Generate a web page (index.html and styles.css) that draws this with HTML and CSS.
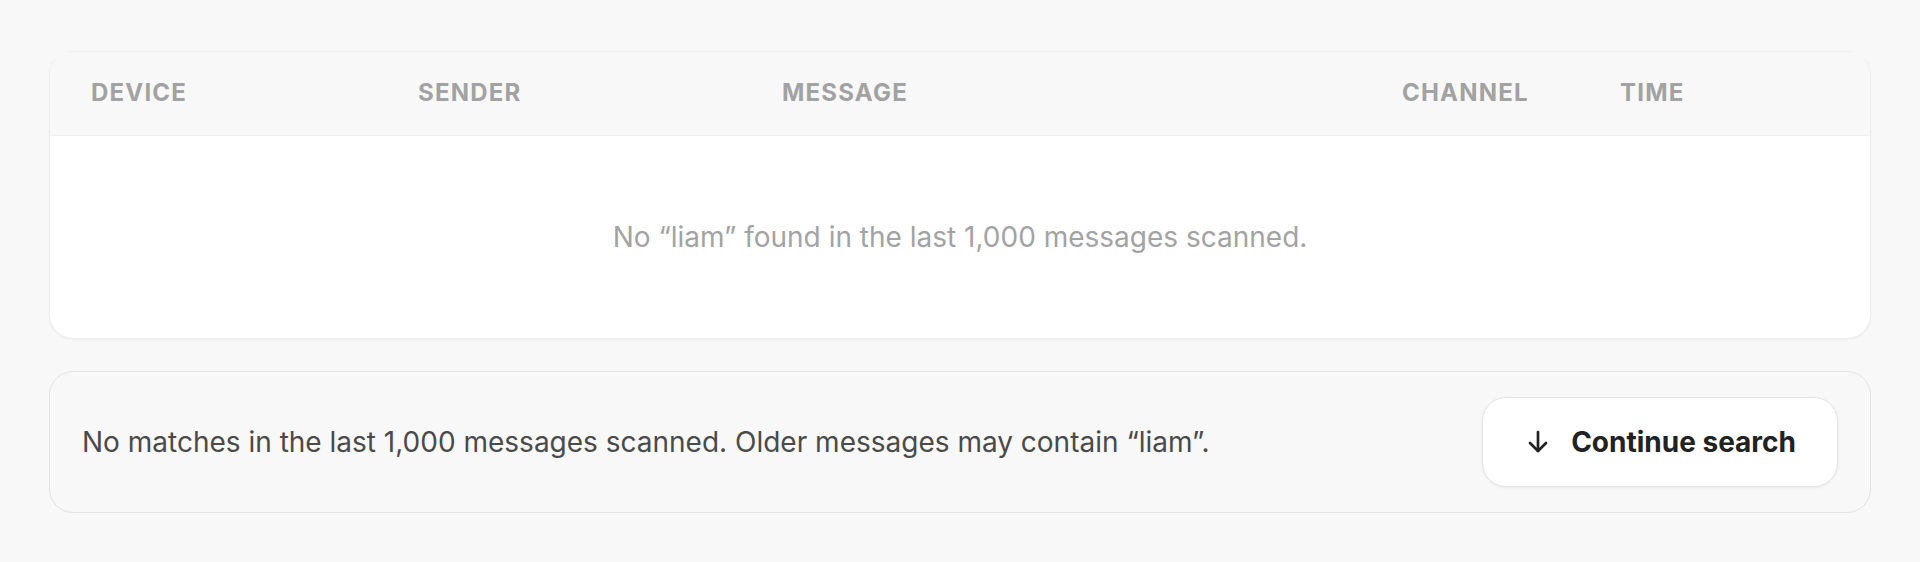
FILE: index.html
```html
<!DOCTYPE html>
<html lang="en">
<head>
  <meta charset="UTF-8">
  <title>Message Search</title>
  <link rel="stylesheet" href="styles.css">
</head>
<body>
  <div class="container">
    <div class="results-card">
      <table class="results">
        <colgroup>
          <col class="col-device">
          <col class="col-sender">
          <col class="col-message">
          <col class="col-channel">
          <col class="col-time">
        </colgroup>
        <thead>
          <tr>
            <th>Device</th><th>Sender</th><th>Message</th><th>Channel</th><th>Time</th>
          </tr>
        </thead>
        <tbody>
          <tr>
            <td class="empty" colspan="5">No “liam” found in the last 1,000 messages scanned.</td>
          </tr>
        </tbody>
      </table>
    </div>

    <div class="scan-note">
      <p>No matches in the last 1,000 messages scanned. Older messages may contain “liam”.</p>
      <button class="continue-btn" type="button">
        <svg width="20" height="24" viewBox="0 0 20 24" fill="none" stroke="currentColor" stroke-width="2.7" stroke-linecap="round" stroke-linejoin="round">
          <path d="M10 2v19"/>
          <path d="M2 13l8 8 8-8"/>
        </svg>
        <span>Continue search</span>
      </button>
    </div>
  </div>
</body>
</html>
```

FILE: styles.css
```css
body {
  margin: 0;
  background: #f8f8f8;
  font-family: Inter, "Noto Sans", sans-serif;
  color: #222;
}
.container {
  padding: 51px 49px 0;
}
.results-card {
  background: white;
  border: 1px solid #ededed;
  border-top: 0;
  border-radius: 24px;
  overflow: hidden;
  box-shadow: 0 1px 3px rgba(0, 0, 0, 0.04);
}
.results {
  width: 100%;
  border-collapse: collapse;
  table-layout: fixed;
}
.col-device { width: 327px; }
.col-sender { width: 364px; }
.col-message { width: 620px; }
.col-channel { width: 218px; }
.results th {
  height: 81px;
  padding: 0 0 2px 41px;
  background: #f8f8f8;
  border-top: 1px solid #efefef;
  border-bottom: 1px solid #f0f0f0;
  text-align: left;
  font-size: 24px;
  font-weight: 700;
  letter-spacing: 0.05em;
  text-transform: uppercase;
  color: #a2a2a2;
}
.results td.empty {
  height: 202px;
  padding: 0;
  text-align: center;
  font-size: 28px;
  color: #a3a3a3;
}
.scan-note {
  display: flex;
  align-items: center;
  justify-content: space-between;
  margin-top: 32px;
  padding: 25px 32px;
  background: #f8f8f8;
  border: 1px solid #e3e3e3;
  border-radius: 24px;
}
.scan-note p {
  margin: 0;
  font-size: 28px;
  color: #4a4a4a;
}
.continue-btn {
  display: flex;
  align-items: center;
  gap: 23px;
  height: 90px;
  padding: 0 41px 0 45px;
  background: white;
  border: 1px solid #e4e4e4;
  border-radius: 24px;
  box-shadow: 0 1px 3px rgba(0, 0, 0, 0.06);
  font-family: inherit;
  font-size: 28px;
  font-weight: 700;
  color: #222;
}
.continue-btn svg {
  display: block;
}
```
